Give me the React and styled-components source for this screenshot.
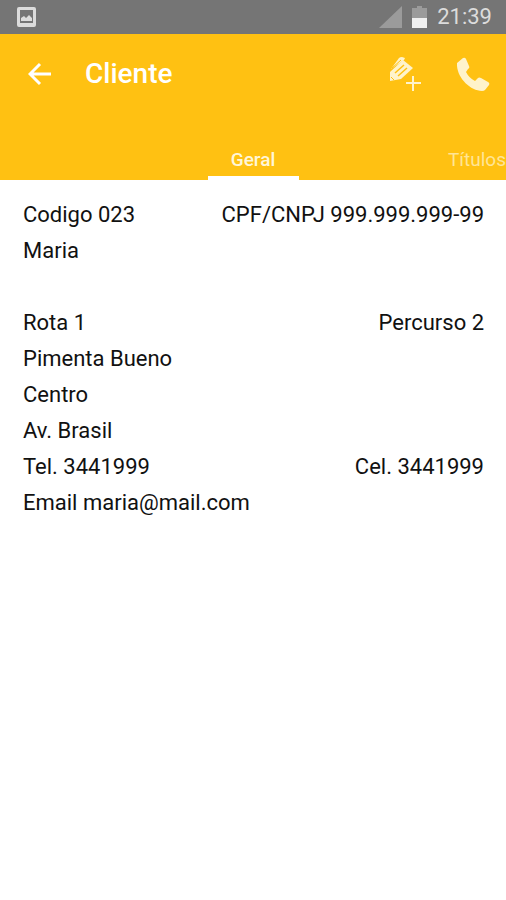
import React from "react";
import styled, { createGlobalStyle, css } from "styled-components";

const GlobalStyle = createGlobalStyle`
  * {
    box-sizing: border-box;
  }
  body {
    margin: 0;
    background: #fff;
    font-family: Roboto, "Liberation Sans", sans-serif;
  }
`;

const StatusBar = styled.div`
  display: flex;
  align-items: center;
  height: 34px;
  padding: 0 14px 0 16px;
  background: #757575;
  color: #dcdcdc;
  svg {
    display: block;
  }
`;

const StatusInfo = styled.div`
  display: flex;
  align-items: center;
  gap: 10px;
  margin-left: auto;
`;

const Clock = styled.time`
  font-size: 22px;
  line-height: 34px;
`;

const Header = styled.header`
  background: #ffc112;
  color: #fff;
`;

const Toolbar = styled.div`
  display: flex;
  align-items: center;
  height: 80px;
  padding: 0 12px 0 20px;
`;

const Title = styled.h1`
  flex: 1;
  margin: 0;
  padding-left: 25px;
  font-size: 28px;
  font-weight: 500;
  line-height: 32px;
`;

const Actions = styled.div`
  display: flex;
  gap: 28px;
`;

const IconButton = styled.button`
  display: flex;
  align-items: center;
  justify-content: center;
  width: 40px;
  height: 40px;
  padding: 0;
  border: none;
  background: transparent;
  color: ${(props) => (props.$soft ? "#fff3cb" : "#fff")};
  cursor: pointer;
`;

const Tabs = styled.div`
  display: grid;
  grid-template-columns: 1fr 91px 1fr;
  height: 66px;
  overflow: hidden;
`;

const Tab = styled.button`
  grid-column: ${(props) => (props.$active ? 2 : 3)};
  justify-self: ${(props) => (props.$active ? "stretch" : "end")};
  padding: 30px 0 0;
  border: none;
  border-bottom: 4px solid transparent;
  background: transparent;
  color: #ffe596;
  font-family: inherit;
  font-size: 19px;
  line-height: 24px;
  cursor: pointer;
  ${(props) =>
    props.$active &&
    css`
      border-bottom-color: #fff;
      color: #fff6d8;
      font-weight: 500;
    `}
`;

const Details = styled.main`
  padding: 17px 22px 16px 23px;
  color: #111;
`;

const Row = styled.div`
  display: flex;
  justify-content: space-between;
  min-height: 36px;
  font-size: 22px;
  line-height: 36px;
  white-space: nowrap;
`;

const rows = [
  ["Codigo 023", "CPF/CNPJ 999.999.999-99"],
  ["Maria"],
  [],
  ["Rota 1", "Percurso 2"],
  ["Pimenta Bueno"],
  ["Centro"],
  ["Av. Brasil"],
  ["Tel. 3441999", "Cel. 3441999"],
  ["Email maria@mail.com"],
];

const PictureIcon = () => (
  <svg width="21" height="22" viewBox="0 0 21 22" aria-hidden="true">
    <path
      d="M3 1h15q2 0 2 2v16q0 2-2 2H3q-2 0-2-2V3q0-2 2-2zM4 4v13h13V4z"
      fill="#dcdcdc"
      fillRule="evenodd"
    />
    <path d="M5 15v-3l3-2 2 2 3-3 3 3v3z" fill="#dcdcdc" />
  </svg>
);

const SignalIcon = () => (
  <svg width="23" height="22" viewBox="0 0 23 22" aria-hidden="true">
    <path d="M23 0v22H0z" fill="#9b9b9b" />
  </svg>
);

const BatteryIcon = () => (
  <svg width="15" height="22" viewBox="0 0 15 22" aria-hidden="true">
    <path d="M5 0h5v2h5v11H0V2h5z" fill="#9b9b9b" />
    <path d="M0 12h15v10H0z" fill="#f0f0f0" />
  </svg>
);

const BackIcon = () => (
  <svg width="24" height="24" viewBox="0 0 24 24" aria-hidden="true">
    <path d="M23 12H3M12 2L2 12l10 10" fill="none" stroke="currentColor" strokeWidth="3" />
  </svg>
);

const NoteAddIcon = () => (
  <svg width="34" height="36" viewBox="0 0 34 36" aria-hidden="true">
    <path d="M2 13L10 2q1-1 3-1l3 1-1 2z" fill="currentColor" />
    <path d="M1 25V16L14 4l10 8L12 23z" fill="currentColor" />
    <path d="M3 12L12 4" stroke="#ffc112" strokeWidth="1" />
    <path d="M6 17l9-8M9 20l9-8" stroke="#ffc112" strokeWidth="1.5" />
    <path d="M2 21l3 3" stroke="#ffc112" strokeWidth="1" />
    <path d="M24 20v15M17 27h15" stroke="currentColor" strokeWidth="2" />
  </svg>
);

const PhoneIcon = () => (
  <svg width="34" height="34" viewBox="0 0 34 34" aria-hidden="true">
    <path
      d="M0 6L6 1q2-1 3 1l3 7q1 2-1 3l-2 3q3 6 9 9l3-3q1-1 3 0l7 4q2 1 1 3l-4 5q-1 1-3 1C13 34-1 20 0 6z"
      fill="currentColor"
    />
  </svg>
);

export default function App() {
  return (
    <>
      <GlobalStyle />
      <StatusBar>
        <PictureIcon />
        <StatusInfo>
          <SignalIcon />
          <BatteryIcon />
          <Clock>21:39</Clock>
        </StatusInfo>
      </StatusBar>
      <Header>
        <Toolbar>
          <IconButton aria-label="Voltar">
            <BackIcon />
          </IconButton>
          <Title>Cliente</Title>
          <Actions>
            <IconButton $soft aria-label="Adicionar pedido">
              <NoteAddIcon />
            </IconButton>
            <IconButton $soft aria-label="Ligar">
              <PhoneIcon />
            </IconButton>
          </Actions>
        </Toolbar>
        <Tabs role="tablist">
          <Tab $active role="tab" aria-selected="true">
            Geral
          </Tab>
          <Tab role="tab" aria-selected="false">
            Títulos
          </Tab>
        </Tabs>
      </Header>
      <Details>
        {rows.map(([left, right], i) => (
          <Row key={i}>
            <span>{left}</span>
            {right && <span>{right}</span>}
          </Row>
        ))}
      </Details>
    </>
  );
}
